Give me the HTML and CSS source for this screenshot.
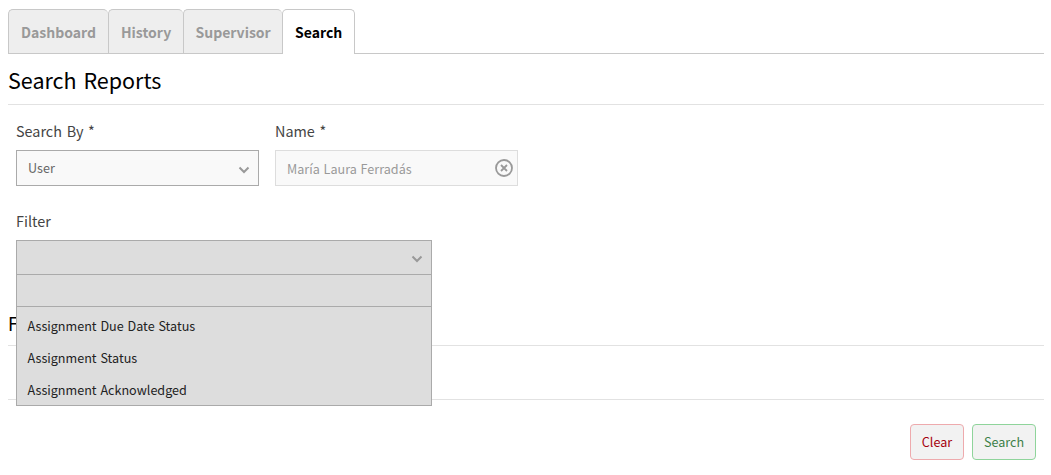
FILE: index.html
```html
<!DOCTYPE html>
<html lang="en">
<head>
<meta charset="utf-8">
<title>Search Reports</title>
<link rel="stylesheet" href="styles.css">
</head>
<body>
<nav class="tabs">
  <a class="tab tab-dashboard"><span>Dashboard</span></a>
  <a class="tab tab-history"><span>History</span></a>
  <a class="tab tab-supervisor"><span>Supervisor</span></a>
  <a class="tab tab-search active"><span>Search</span></a>
</nav>
<main>
  <h1 class="heading"><span>Search Reports</span></h1>
  <form class="fields">
    <div class="row">
      <div class="field">
        <label class="label"><span>Search By *</span></label>
        <div class="control"><span class="value">User</span>
          <svg class="chevron" viewBox="0 0 12 8"><path d="M1.500 1.500 6 6l4.500-4.500"/></svg>
        </div>
      </div>
      <div class="field">
        <label class="label"><span>Name *</span></label>
        <div class="control disabled"><span>María Laura Ferradás</span>
          <svg class="clear-icon" viewBox="0 0 18 18"><circle cx="9" cy="9" r="8"/><path d="m6 6 6 6m0-6-6 6"/></svg>
        </div>
      </div>
    </div>
    <div class="filter">
      <label class="label"><span>Filter</span></label>
      <div class="control open">
        <svg class="chevron" viewBox="0 0 12 8"><path d="M1.500 1.500 6 6l4.500-4.500"/></svg>
        <div class="menu">
          <div class="menu-search"></div>
          <div class="option"><span>Assignment Due Date Status</span></div>
          <div class="option"><span>Assignment Status</span></div>
          <div class="option"><span>Assignment Acknowledged</span></div>
        </div>
      </div>
    </div>
  </form>
  <h2 class="subheading">F</h2>
  <div class="results"></div>
  <div class="actions">
    <button class="button clear"><span>Clear</span></button>
    <button class="button search"><span>Search</span></button>
  </div>
</main>
</body>
</html>
```
FILE: styles.css
```css
* { box-sizing: border-box; }
body {
  margin: 0;
  padding: 9px 7px 0 8px;
  background: #fff;
  font-family: "Noto Sans CJK SC", "Open Sans", sans-serif;
  font-size: 12.6px;
  word-spacing: 1px;
  color: #000;
}
.tabs {
  display: flex;
  height: 45px;
  border-bottom: 1px solid #c8c8c8;
}
.tab {
  height: 44px;
  border: 1px solid #c8c8c8;
  border-bottom: 0;
  border-right: 0;
  border-radius: 5px 5px 0 0;
  background: #eee;
  color: #999;
  font-size: 14px;
  font-weight: 700;
  line-height: 44px;
  padding-left: 12px;
}
.tab-dashboard { width: 100px; }
.tab-history { width: 75px; }
.tab-supervisor { width: 99px; padding-left: 11.500px; }
.tab-search { width: 73px; }
.tab.active {
  height: 45px;
  border-right: 1px solid #c8c8c8;
  background: #fff;
  color: #000;
}
.heading, .subheading {
  margin: 0;
  font-weight: 400;
  border-bottom: 1px solid #e2e2e2;
}
.heading {
  height: 51px;
  font-size: 21.5px;
  line-height: 52px;
  word-spacing: 2px;
}
.fields { height: 196px; padding: 16px 8px 0; margin: 0; }
.row { display: flex; gap: 16px; }
.field { width: 243px; height: 90px; }
.label {
  display: block;
  height: 29px;
  line-height: 20px;
  font-size: 14.4px;
  word-spacing: 1.5px;
  color: #444;
}
.control {
  display: flex;
  align-items: center;
  justify-content: space-between;
  height: 36px;
  padding: 0 8px 0 11px;
  border: 1px solid #aaa;
  background: #f9f9f9;
  color: #666;
}
.value { margin-top: -1px; }
.disabled { border-color: #ddd; color: #999; padding-right: 4px; }
.chevron { width: 12px; height: 8px; fill: none; stroke: #999; stroke-width: 2; margin-top: 3px; }
.clear-icon { width: 18px; height: 18px; fill: none; stroke: #999; stroke-width: 1.8; }
.filter { width: 416px; }
.open {
  position: relative;
  justify-content: flex-end;
  height: 35px;
  background: #ddd;
  border-color: #aaa;
}
.menu {
  position: absolute;
  top: 33px;
  left: -1px;
  right: -1px;
  height: 132px;
  border: 1px solid #aaa;
  background: #ddd;
  color: #222;
}
.menu-search { height: 32px; border-bottom: 1px solid #aaa; margin-bottom: 3px; }
.option { height: 32px; line-height: 32px; padding-left: 10.500px; }
.subheading { height: 45px; font-size: 18px; line-height: 45px; }
.results { height: 54px; border-bottom: 1px solid #e2e2e2; }
.actions { display: flex; justify-content: flex-end; gap: 8px; padding: 24px 8px 0 0; }
.button {
  height: 36px;
  padding: 0 0 2px;
  border: 1px solid;
  border-radius: 4px;
  background: #f2f2f2;
  font: inherit;
}
.clear { width: 54px; border-color: #eeaaad; color: #a5000d; }
.search { width: 64px; border-color: #8fd49b; color: #3c8048; }
```
